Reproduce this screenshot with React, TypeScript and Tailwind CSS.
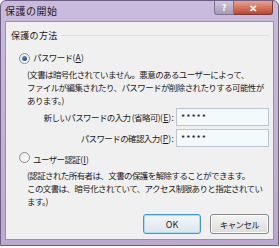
import React from "react";

const font = { fontFamily: '"Noto Sans CJK JP", "Noto Sans", sans-serif' };

function Radio({ checked }: { checked: boolean }) {
  return (
    <span className="relative inline-flex h-[11px] w-[11px] shrink-0 items-center justify-center rounded-full border border-[#8e8f8f] bg-gradient-to-br from-[#e6e6e6] to-[#ffffff]">
      {checked ? (
        <span className="h-[5px] w-[5px] rounded-full bg-gradient-to-br from-[#6fa8d8] to-[#123c6a]" />
      ) : null}
    </span>
  );
}

function Ascii({ pre, key1, post }: { pre: string; key1: string; post: string }) {
  return (
    <span className="tracking-[0.2px]">
      {pre}
      <span className="underline">{key1}</span>
      {post}
    </span>
  );
}

export default function App() {
  return (
    <div className="h-[248px] w-[280px] overflow-hidden bg-white text-[#1b1b1b]" style={font}>
      <div className="flex h-[246px] w-[279px] flex-col rounded-t-[6px] border border-[#6c5f86] bg-gradient-to-b from-[#c9bbdd] to-[#bba9d2]">
        {/* title bar */}
        <div className="flex h-[20px] items-start justify-between">
          <span className="ml-[4px] mt-[4px] text-[10px] leading-[12px] tracking-[0.5px] text-[#1f1a2a]">保護の開始</span>
          <div className="mr-[5px] flex">
            <div className="flex h-[14px] w-[20px] items-center justify-center rounded-bl-[3px] border border-t-0 border-[#7d7390] bg-gradient-to-b from-[#cfc7dc] to-[#a59bb6] text-[9px] font-bold leading-none text-white">
              ?
            </div>
            <div className="flex h-[14px] w-[39px] items-center justify-center rounded-br-[3px] border border-l-0 border-t-0 border-[#7d3a33] bg-gradient-to-b from-[#e4a394] to-[#c1412c] text-[10px] font-bold leading-none text-white">
              ✕
            </div>
          </div>
        </div>
        {/* client area */}
        <div className="mx-[4px] flex h-[219px] flex-col whitespace-nowrap border border-[#9a8db4] bg-[#f0f0f0] text-[8.5px] leading-[13px] tracking-[-0.6px]">
          <div className="mt-[7px] flex h-[12px] items-center">
            <span className="ml-[5px] text-[9px] tracking-[0.3px]">保護の方法</span>
            <span className="ml-[3px] mr-[4px] flex-1 border-t border-[#dcdfe3]" />
          </div>
          <div className="mt-[10px] flex h-[12px] items-center">
            <span className="ml-[13px]">
              <Radio checked />
            </span>
            <span className="ml-[3px]">
              パスワード<Ascii pre="(" key1="A" post=")" />
            </span>
          </div>
          <div className="ml-[21px] mt-[5px] leading-[13px]">
            <div>(文書は暗号化されていません。悪意のあるユーザーによって、</div>
            <div>ファイルが編集されたり、パスワードが削除されたりする可能性が</div>
            <div>あります。)</div>
          </div>
          <div className="mt-[1px] flex h-[18px] items-center">
            <span className="w-[170px] pr-[2px] text-right">
              新しいパスワードの入力 (省略可)<Ascii pre="(" key1="E" post="):" />
            </span>
            <div className="flex h-[18px] w-[93px] items-center border border-[#b7c7d6] bg-[#f4f9fc] pl-[4px] text-[9px] tracking-[1px]">
              *****
            </div>
          </div>
          <div className="mt-[3px] flex h-[18px] items-center">
            <span className="w-[170px] pr-[2px] text-right">
              パスワードの確認入力<Ascii pre="(" key1="P" post="):" />
            </span>
            <div className="flex h-[18px] w-[93px] items-center border border-[#b7c7d6] bg-[#f4f9fc] pl-[4px] text-[9px] tracking-[1px]">
              *****
            </div>
          </div>
          <div className="mt-[6px] flex h-[12px] items-center">
            <span className="ml-[13px]">
              <Radio checked={false} />
            </span>
            <span className="ml-[3px]">
              ユーザー認証<Ascii pre="(" key1="I" post=")" />
            </span>
          </div>
          <div className="ml-[21px] mt-[4px] leading-[13px]">
            <div>(認証された所有者は、文書の保護を解除することができます。</div>
            <div>この文書は、暗号化されていて、アクセス制限ありと指定されてい</div>
            <div>ます。)</div>
          </div>
          <div className="mt-[6px] flex justify-end gap-[9px] pr-[4px]">
            <button className="flex h-[20px] w-[58px] items-center justify-center rounded-[3px] border border-[#3c9bd7] bg-gradient-to-b from-[#f2f6f9] to-[#dde6ec] text-[9px] leading-none tracking-normal shadow-[inset_0_0_0_1px_#a9dcf5]">
              OK
            </button>
            <button className="flex h-[20px] w-[59px] items-center justify-center rounded-[3px] border border-[#8a8a8a] bg-gradient-to-b from-[#f4f4f4] to-[#dcdcdc] text-[8.5px] leading-none shadow-[inset_0_0_0_1px_#fbfbfb]">
              キャンセル
            </button>
          </div>
        </div>
      </div>
    </div>
  );
}
